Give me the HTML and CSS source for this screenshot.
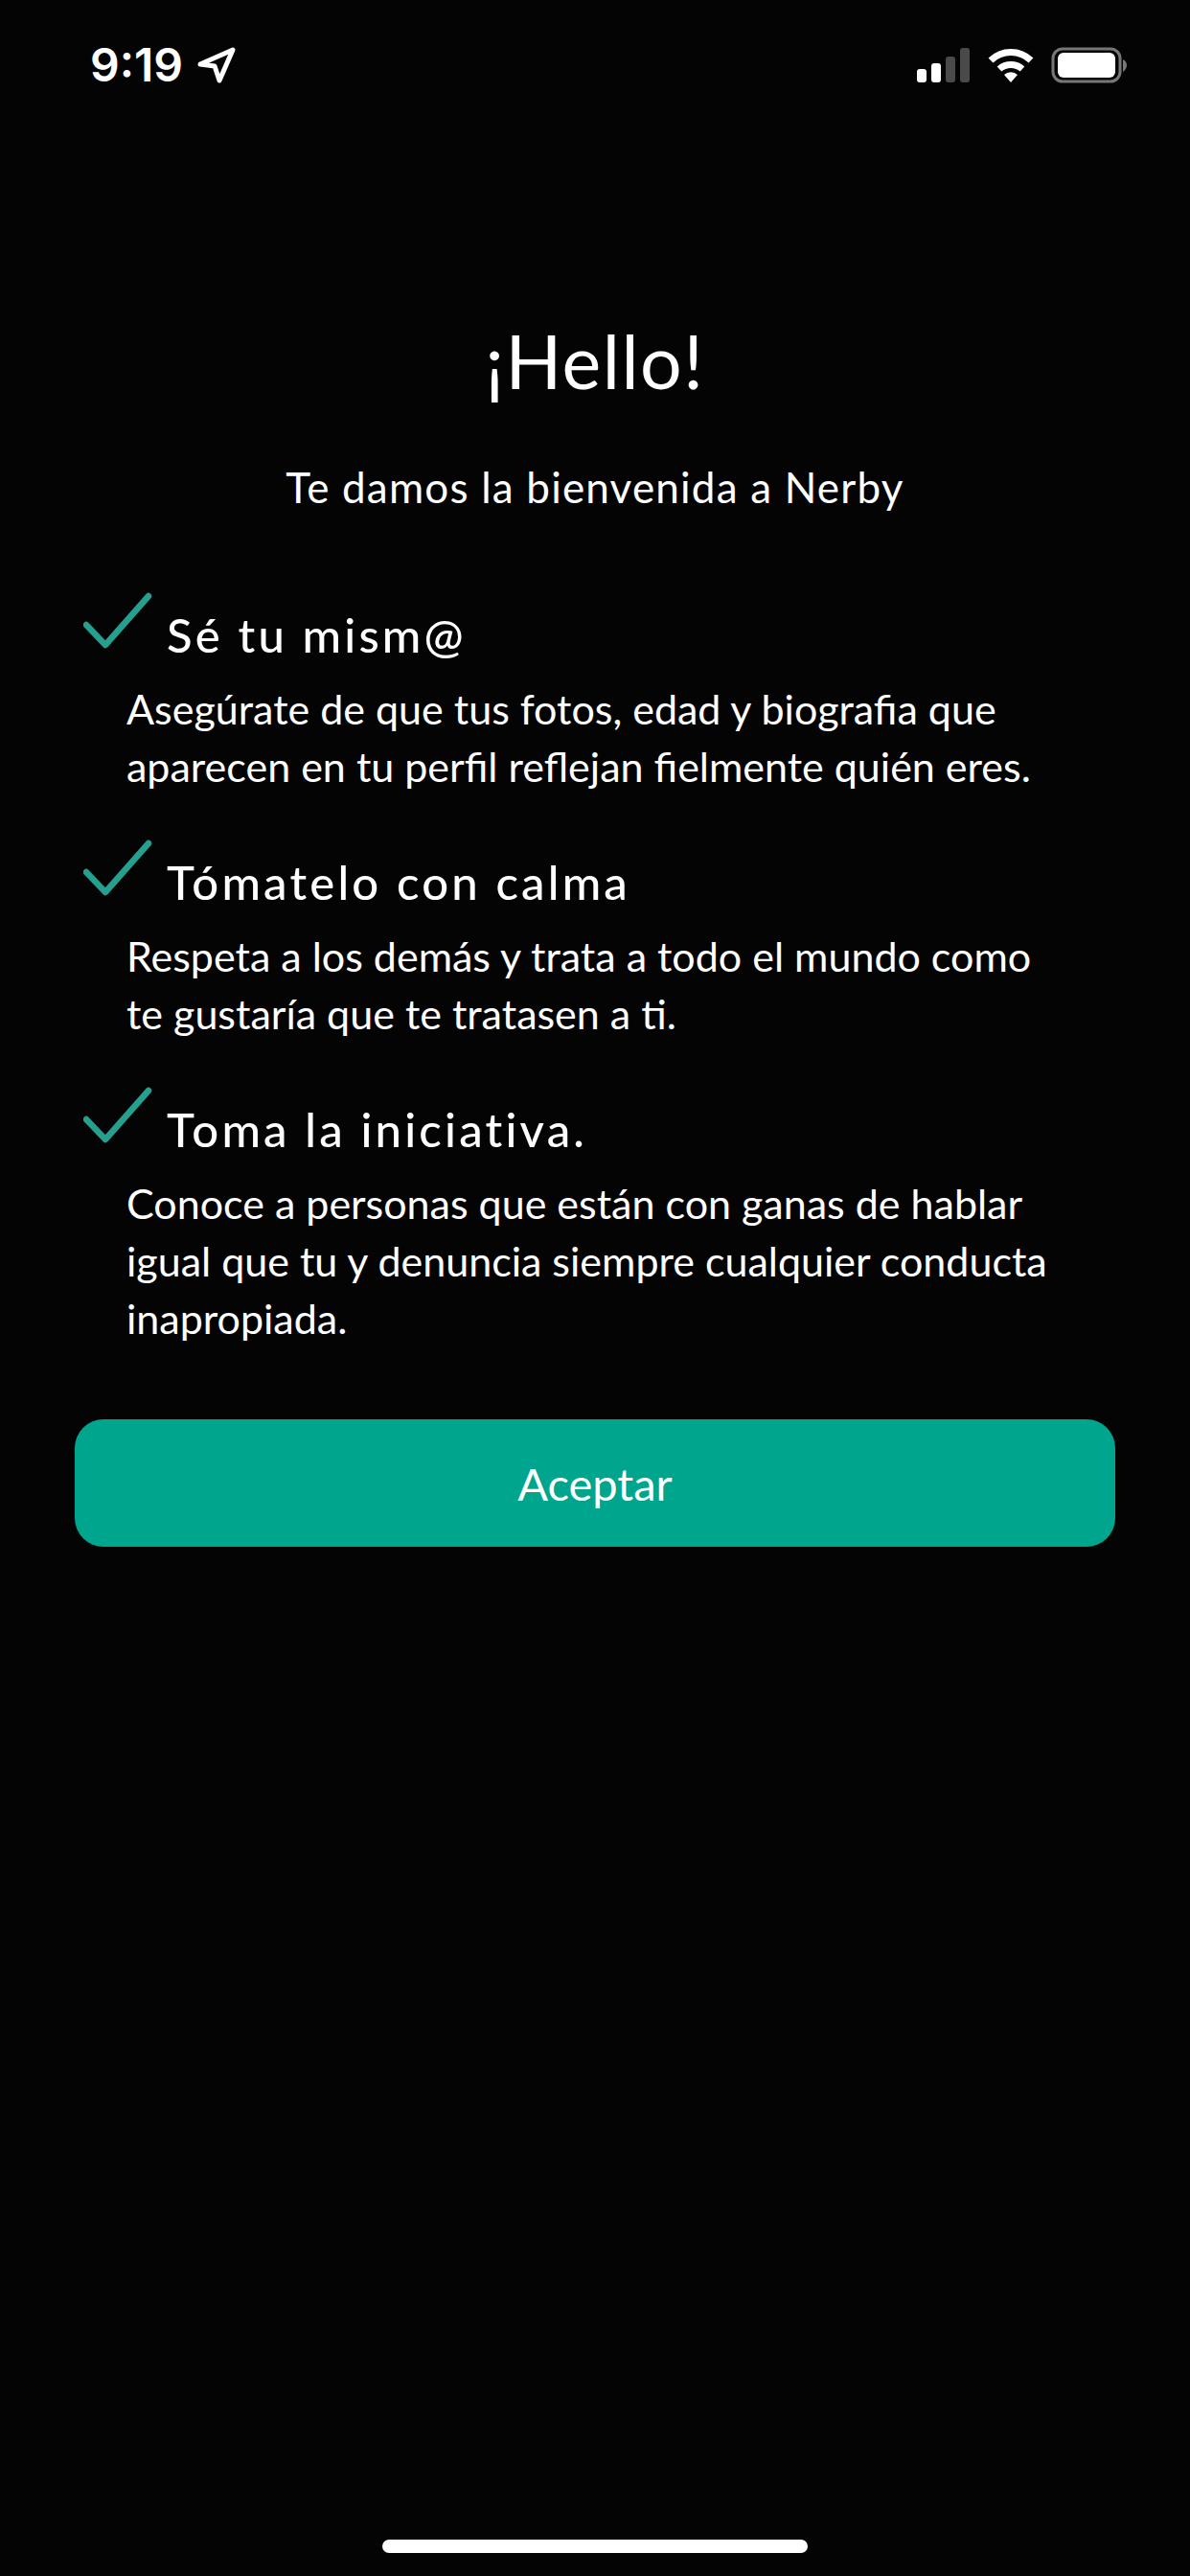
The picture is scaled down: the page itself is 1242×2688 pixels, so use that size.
FILE: index.html
```html
<!DOCTYPE html>
<html lang="es">
<head>
    <meta charset="UTF-8">
    <meta name="viewport" content="width=device-width, initial-scale=1.0">
    <title>Nerby</title>
    <link rel="stylesheet" href="styles.css">
</head>
<body>
    <div class="screen">
        <div class="status-bar">
            <div class="status-left">
                <span class="clock">9:19</span>
                <svg class="location-icon" width="42" height="40" viewBox="0 0 42 40">
                    <path d="M4 19 L38 4 L24 36 L19 21 Z" fill="none" stroke="#fff" stroke-width="5" stroke-linejoin="round"/>
                </svg>
            </div>
            <div class="status-right">
                <svg width="56" height="36" viewBox="0 0 56 36">
                    <rect x="0" y="22" width="10" height="14" rx="3" fill="#fff"/>
                    <rect x="15" y="16" width="10" height="20" rx="3" fill="#fff"/>
                    <rect x="30" y="9" width="10" height="27" rx="3" fill="#4a4a4a"/>
                    <rect x="45" y="0" width="10" height="36" rx="3" fill="#4a4a4a"/>
                </svg>
                <svg width="48" height="36" viewBox="0 0 48 36">
                    <path d="M3 13 A30 30 0 0 1 45 13" fill="none" stroke="#fff" stroke-width="7"/>
                    <path d="M12 22 A18 18 0 0 1 36 22" fill="none" stroke="#fff" stroke-width="7"/>
                    <path d="M17 28 A10 10 0 0 1 31 28 L24 36 Z" fill="#fff"/>
                </svg>
                <svg width="80" height="38" viewBox="0 0 80 38">
                    <rect x="2" y="2" width="70" height="34" rx="10" fill="none" stroke="#777" stroke-width="3"/>
                    <rect x="7" y="6" width="60" height="26" rx="6" fill="#fff"/>
                    <path d="M75 13 Q79 15 79 19 Q79 23 75 26 Z" fill="#777"/>
                </svg>
            </div>
        </div>

        <div class="content">
            <h1 class="title">¡Hello!</h1>
            <p class="subtitle">Te damos la bienvenida a Nerby</p>

            <div class="rule">
                <div class="rule-head">
                    <svg class="check" width="72" height="60" viewBox="0 0 72 60">
                        <path d="M3 34 L23 55 L68 4" fill="none" stroke="#26a08e" stroke-width="6.5" stroke-linecap="round" stroke-linejoin="round"/>
                    </svg>
                    <h2>Sé tu mism@</h2>
                </div>
                <p>Asegúrate de que tus fotos, edad y biografia que<br>aparecen en tu perfil reflejan fielmente quién eres.</p>
            </div>

            <div class="rule">
                <div class="rule-head">
                    <svg class="check" width="72" height="60" viewBox="0 0 72 60">
                        <path d="M3 34 L23 55 L68 4" fill="none" stroke="#26a08e" stroke-width="6.5" stroke-linecap="round" stroke-linejoin="round"/>
                    </svg>
                    <h2>Tómatelo con calma</h2>
                </div>
                <p>Respeta a los demás y trata a todo el mundo como<br>te gustaría que te tratasen a ti.</p>
            </div>

            <div class="rule">
                <div class="rule-head">
                    <svg class="check" width="72" height="60" viewBox="0 0 72 60">
                        <path d="M3 34 L23 55 L68 4" fill="none" stroke="#26a08e" stroke-width="6.5" stroke-linecap="round" stroke-linejoin="round"/>
                    </svg>
                    <h2>Toma la iniciativa.</h2>
                </div>
                <p>Conoce a personas que están con ganas de hablar<br>igual que tu y denuncia siempre cualquier conducta<br>inapropiada.</p>
            </div>

            <button class="accept-btn">Aceptar</button>
        </div>

        <div class="home-bar"></div>
    </div>
</body>
</html>
```

FILE: styles.css
```css
* {
    margin: 0;
    padding: 0;
    box-sizing: border-box;
}

body {
    font-family: Lato, "Open Sans", sans-serif;
    background: #040404;
    color: #fff;
}

.screen {
    width: 1242px;
    height: 2688px;
    display: flex;
    flex-direction: column;
}

.status-bar {
    height: 136px;
    padding: 44px 65px 0 94px;
    display: flex;
    justify-content: space-between;
    align-items: flex-start;
}

.status-left {
    display: flex;
    align-items: center;
    gap: 14px;
}

.clock {
    font-family: Inter, sans-serif;
    font-size: 48px;
    line-height: 48px;
    font-weight: 600;
}

.status-right {
    display: flex;
    align-items: center;
    gap: 18px;
    padding-top: 5px;
}

.content {
    flex: 1;
    padding: 196px 78px 0;
}

.title {
    font-size: 77px;
    line-height: 88px;
    font-weight: 400;
    letter-spacing: 1.5px;
    text-align: center;
}

.subtitle {
    font-size: 44px;
    line-height: 60px;
    letter-spacing: 1.2px;
    text-align: center;
    margin: 58px 0 80px;
}

.rule {
    margin-bottom: 46px;
}

.rule-head {
    position: relative;
    padding: 14px 0 0 96px;
    margin-bottom: 18px;
}

.check {
    position: absolute;
    left: 9px;
    top: 0;
}

.rule h2 {
    font-size: 49px;
    line-height: 60px;
    font-weight: 500;
    letter-spacing: 3.2px;
}

.rule p {
    font-size: 43px;
    line-height: 60px;
    padding-left: 54px;
}

.accept-btn {
    display: block;
    width: 1086px;
    height: 133px;
    margin-top: 75px;
    background: #00a58e;
    color: #fff;
    border: none;
    border-radius: 30px;
    font-family: inherit;
    font-size: 47px;
}

.home-bar {
    width: 444px;
    height: 14px;
    border-radius: 7px;
    background: #fff;
    margin: 0 auto 24px;
}
```
